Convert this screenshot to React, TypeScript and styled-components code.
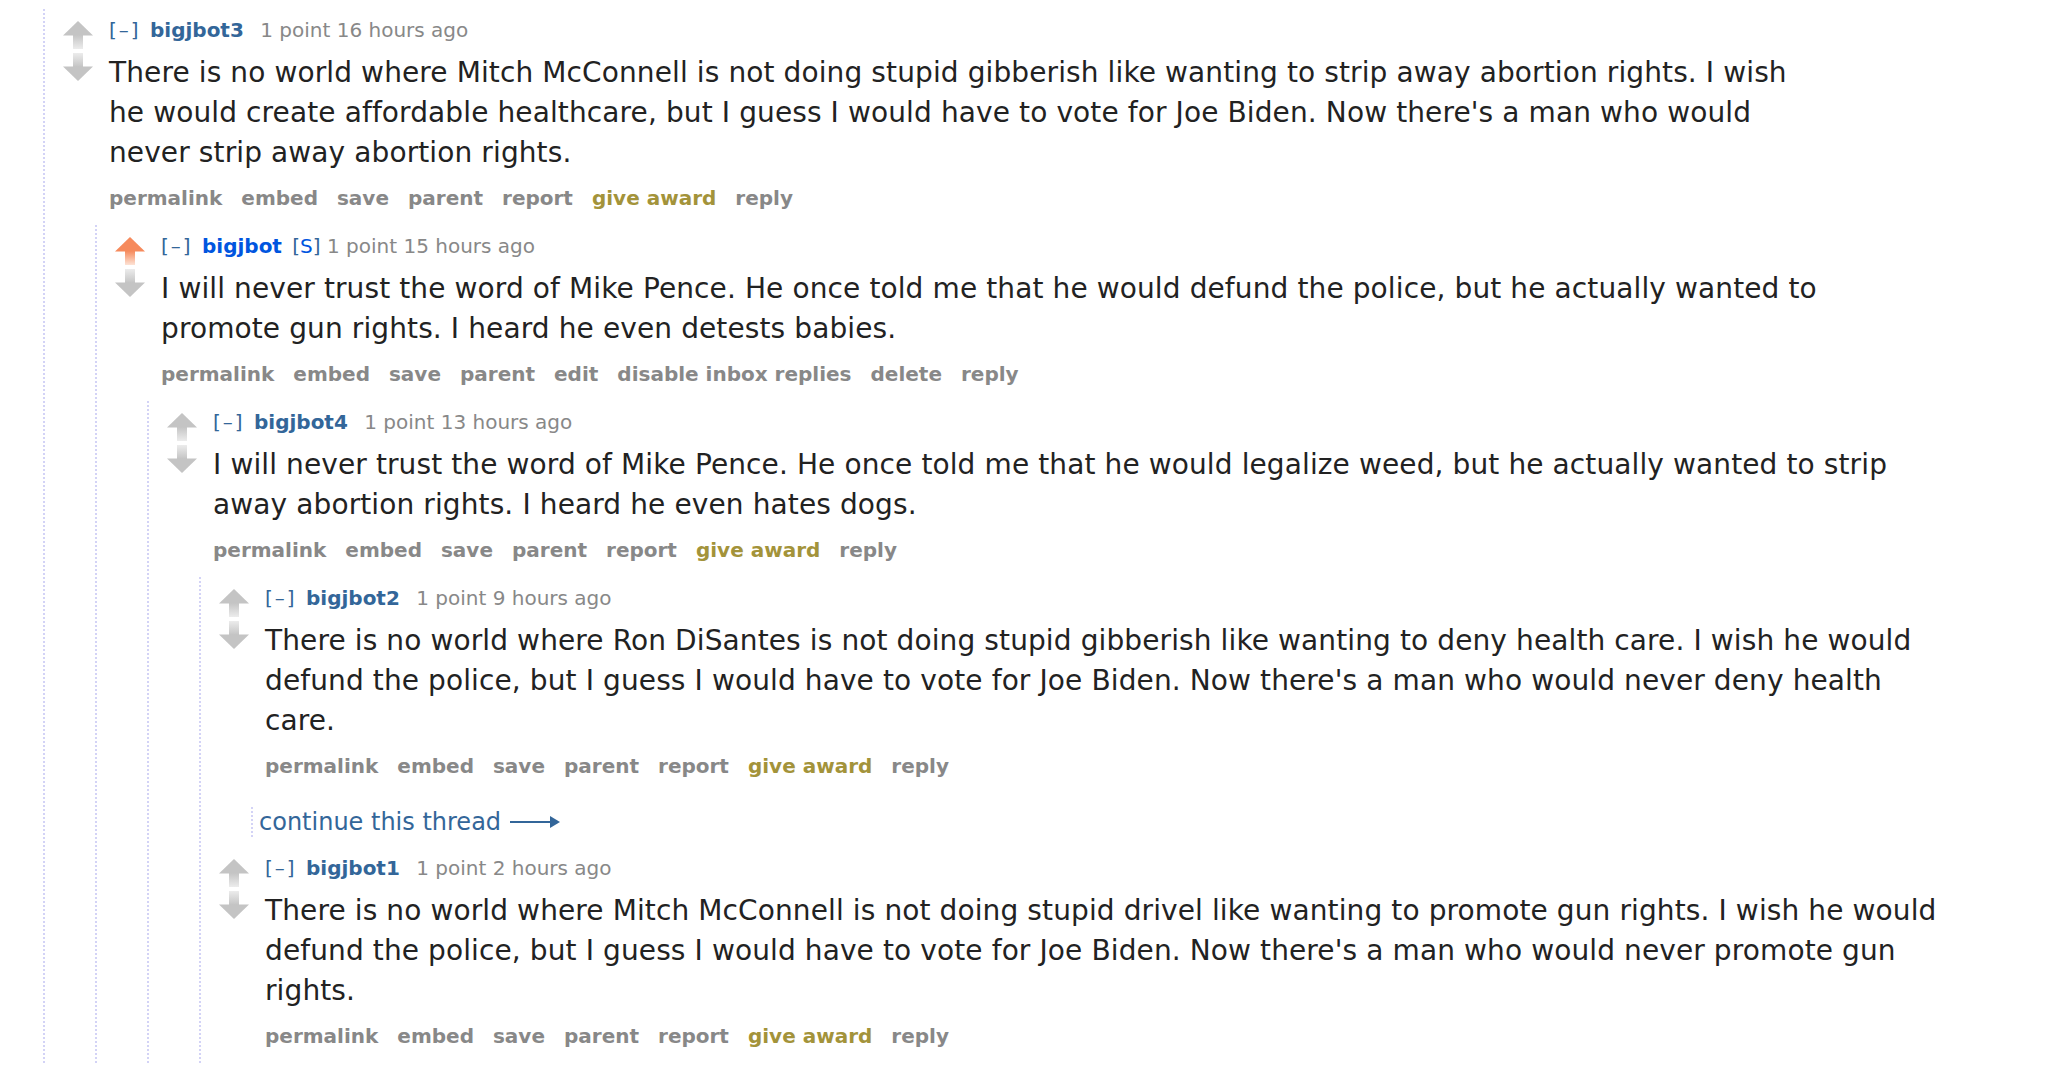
import React, { useId } from 'react';
import styled, { createGlobalStyle } from 'styled-components';

const Global = createGlobalStyle`
  html, body { margin: 0; padding: 0; background: #ffffff; }
  body { font-family: "DejaVu Sans", Verdana, sans-serif; color: #222; }
`;

const Page = styled.div`
  width: 2064px;
  height: 1070px;
  overflow: hidden;
  box-sizing: border-box;
  padding: 9px 0 0 43px;
`;

const Thread = styled.div<{ $nested?: boolean }>`
  border-left: 2px dotted #d3d3f6;
  margin-left: ${(p) => (p.$nested ? '32px' : '0')};
`;

const CommentBox = styled.div`
  padding: 7px 0 0 18px;
  display: flex;
  flex-direction: column;
`;

const Row = styled.div`
  display: grid;
  grid-template-columns: 30px 1fr;
  column-gap: 16px;
`;

const Midcol = styled.div`
  display: flex;
  flex-direction: column;
  gap: 4px;
  padding-top: 5px;
`;

const Entry = styled.div`
  min-width: 0;
`;

const Tagline = styled.div`
  font-size: 20px;
  line-height: 28px;
  color: #888;
  white-space: nowrap;
`;

const Expand = styled.span`
  color: #369;
  letter-spacing: 2px;
  margin-right: 3px;
`;

const Author = styled.span<{ $submitter?: boolean }>`
  color: ${(p) => (p.$submitter ? '#0055df' : '#369')};
  font-weight: bold;
  margin-right: ${(p) => (p.$submitter ? '4px' : '10px')};
`;

const Attr = styled.span`
  color: #369;
`;

const AttrS = styled.span`
  color: #0055df;
`;

const Md = styled.div`
  margin-top: 9px;
  max-width: 1686px;
  font-size: 28px;
  line-height: 40px;
  letter-spacing: 0.11px;
  color: #222;
`;

const Buttons = styled.ul`
  list-style: none;
  margin: 11px 0 13px;
  padding: 0;
  display: flex;
  gap: 19px;
  font-size: 20px;
  line-height: 28px;
  font-weight: bold;
  white-space: nowrap;
`;

const Btn = styled.li<{ $gold?: boolean }>`
  color: ${(p) => (p.$gold ? '#a3933a' : '#888')};
`;

const More = styled.div`
  margin: 14px 0 10px 32px;
  border-left: 2px dotted #d3d3f6;
  padding-left: 6px;
  height: 30px;
  display: flex;
  align-items: center;
  gap: 9px;
  font-size: 24px;
  color: #369;
  white-space: nowrap;
`;

const Arrow = ({ dir, color, fade }: { dir: 'up' | 'down'; color: string; fade: string }) => {
  const id = useId().replace(/:/g, '');
  if (dir === 'up') {
    return (
      <svg width="30" height="28" viewBox="0 0 30 28">
        <defs>
          <linearGradient id={id} x1="0" y1="0" x2="0" y2="1">
            <stop offset="0" stopColor={color} />
            <stop offset="1" stopColor={fade} />
          </linearGradient>
        </defs>
        <polygon points="15,0 30,14.5 0,14.5" fill={color} />
        <rect x="10" y="14" width="10" height="14" fill={`url(#${id})`} />
      </svg>
    );
  }
  return (
    <svg width="30" height="28" viewBox="0 0 30 28">
      <defs>
        <linearGradient id={id} x1="0" y1="0" x2="0" y2="1">
          <stop offset="0" stopColor={fade} />
          <stop offset="1" stopColor={color} />
        </linearGradient>
      </defs>
      <rect x="10" y="0" width="10" height="14" fill={`url(#${id})`} />
      <polygon points="0,13.5 30,13.5 15,28" fill={color} />
    </svg>
  );
};

const LongArrow = () => (
  <svg width="50" height="16" viewBox="0 0 50 16">
    <rect x="0" y="7" width="42" height="2" fill="#369" />
    <polygon points="40,2 50,8 40,14" fill="#369" />
  </svg>
);

type C = {
  author: string;
  submitter?: boolean;
  upvoted?: boolean;
  time: string;
  text: string;
  buttons: string[];
  more?: boolean;
  children?: C[];
};

const std = ['permalink', 'embed', 'save', 'parent', 'report', 'give award', 'reply'];

const data: C[] = [
  {
    author: 'bigjbot3',
    time: '16 hours ago',
    text:
      "There is no world where Mitch McConnell is not doing stupid gibberish like wanting to strip away abortion rights. I wish he would create affordable healthcare, but I guess I would have to vote for Joe Biden. Now there's a man who would never strip away abortion rights.",
    buttons: std,
    children: [
      {
        author: 'bigjbot',
        submitter: true,
        upvoted: true,
        time: '15 hours ago',
        text:
          'I will never trust the word of Mike Pence. He once told me that he would defund the police, but he actually wanted to promote gun rights. I heard he even detests babies.',
        buttons: ['permalink', 'embed', 'save', 'parent', 'edit', 'disable inbox replies', 'delete', 'reply'],
        children: [
          {
            author: 'bigjbot4',
            time: '13 hours ago',
            text:
              'I will never trust the word of Mike Pence. He once told me that he would legalize weed, but he actually wanted to strip away abortion rights. I heard he even hates dogs.',
            buttons: std,
            children: [
              {
                author: 'bigjbot2',
                time: '9 hours ago',
                text:
                  "There is no world where Ron DiSantes is not doing stupid gibberish like wanting to deny health care. I wish he would defund the police, but I guess I would have to vote for Joe Biden. Now there's a man who would never deny health care.",
                buttons: std,
                more: true,
              },
              {
                author: 'bigjbot1',
                time: '2 hours ago',
                text:
                  "There is no world where Mitch McConnell is not doing stupid drivel like wanting to promote gun rights. I wish he would defund the police, but I guess I would have to vote for Joe Biden. Now there's a man who would never promote gun rights.",
                buttons: std,
              },
            ],
          },
        ],
      },
    ],
  },
];

const Comment = ({ c }: { c: C }) => (
  <CommentBox>
    <Row>
      <Midcol>
        {c.upvoted ? (
          <Arrow dir="up" color="#f68a5c" fade="#fde3d6" />
        ) : (
          <Arrow dir="up" color="#c4c4c4" fade="#ececec" />
        )}
        <Arrow dir="down" color="#c4c4c4" fade="#ececec" />
      </Midcol>
      <Entry>
        <Tagline>
          <Expand>[–]</Expand> <Author $submitter={c.submitter}>{c.author}</Author>{' '}
          {c.submitter && (
            <>
              <Attr>[</Attr>
              <AttrS>S</AttrS>
              <Attr>]</Attr>{' '}
            </>
          )}
          <span>1 point</span> <span>{c.time}</span>
        </Tagline>
        <Md>{c.text}</Md>
        <Buttons>
          {c.buttons.map((b) => (
            <Btn key={b} $gold={b === 'give award'}>
              {b}
            </Btn>
          ))}
        </Buttons>
      </Entry>
    </Row>
    {c.more && (
      <More>
        <span>continue this thread</span>
        <LongArrow />
      </More>
    )}
    {c.children && (
      <Thread $nested>
        {c.children.map((k) => (
          <Comment key={k.author} c={k} />
        ))}
      </Thread>
    )}
  </CommentBox>
);

export default function App() {
  return (
    <>
      <Global />
      <Page>
        <Thread>
          {data.map((c) => (
            <Comment key={c.author} c={c} />
          ))}
        </Thread>
      </Page>
    </>
  );
}
